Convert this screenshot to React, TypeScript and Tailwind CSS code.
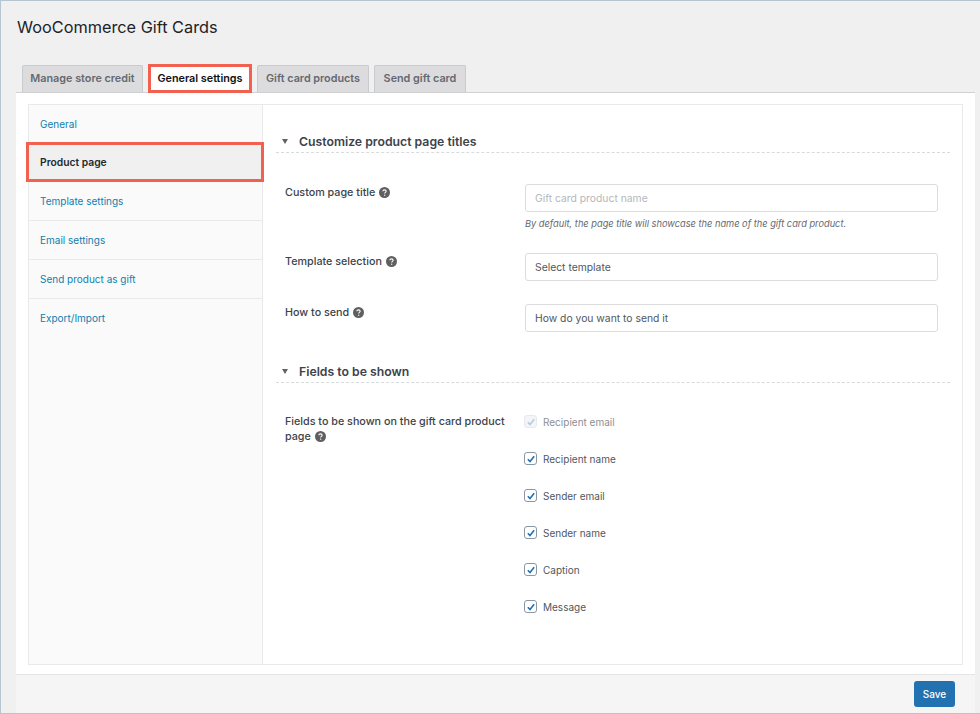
import React from "react";

function Help() {
  return (
    <svg viewBox="0 0 12 12" className="inline-block w-[11px] h-[11px] shrink-0 align-[-2px] ml-[4px]">
      <circle cx="6" cy="6" r="6" fill="#5f5f5f" />
      <path d="M4.2 4.7c0-1 .8-1.6 1.8-1.6s1.8.6 1.8 1.5c0 1.3-1.6 1.3-1.6 2.5" fill="none" stroke="#fff" strokeWidth="1.2" />
      <circle cx="6.2" cy="8.9" r=".75" fill="#fff" />
    </svg>
  );
}

function Check({ disabled }: { disabled?: boolean }) {
  return (
    <span className={"w-[13px] h-[13px] -ml-[1px] -mt-[2px] rounded-[3px] border flex items-center justify-center shrink-0 " + (disabled ? "border-[#e6eaee] bg-[#f3f5f7]" : "border-[#8a97a3] bg-white")}>
      <svg viewBox="0 0 12 12" className="w-[10px] h-[10px]">
        <path d="M2.2 6.2 4.8 9 9.8 2.6" fill="none" stroke={disabled ? "#b4cbe0" : "#2271b1"} strokeWidth="1.9" />
      </svg>
    </span>
  );
}

function Section({ title }: { title: string }) {
  return (
    <div className="flex items-center h-[25px] border-b border-dashed border-[#d8dbde] pt-[3px]">
      <span className="w-0 h-0 ml-[6px] border-l-[3.5px] border-r-[3.5px] border-t-[5px] border-l-transparent border-r-transparent border-t-[#5f6368]" />
      <span className="ml-[11px] text-[12.25px] leading-[16px] font-semibold text-[#3c434a]">{title}</span>
    </div>
  );
}

const Label = ({ children, top }: { children: React.ReactNode; top?: boolean }) => (
  <div className={"w-[249px] pl-[9px] pr-[10px] text-[#3c434a] font-medium text-[10.75px] leading-[14.5px] " + (top ? "pt-[1px]" : "pt-[2px]")}>{children}</div>
);

const Input = ({ children, muted }: { children: React.ReactNode; muted?: boolean }) => (
  <div className={"w-[413px] h-[28px] border border-[#dcdcde] rounded-[3px] bg-white px-[9px] pt-[1px] flex items-center text-[10.35px] " + (muted ? "text-[#b5b8bc]" : "text-[#50575e]")}>{children}</div>
);

const sideItems = ["General", "Product page", "Template settings", "Email settings", "Send product as gift", "Export/Import"];
const tabs = ["Manage store credit", "General settings", "Gift card products", "Send gift card"];
const checks = ["Recipient email", "Recipient name", "Sender email", "Sender name", "Caption", "Message"];

export default function App() {
  return (
    <div className="w-[980px] h-[714px] overflow-hidden bg-[#f0f0f1] border-t border-l border-b border-[#b5c6d0] flex flex-col pl-[15px] pr-[5px] text-[#3c434a]" style={{ fontFamily: "Inter, 'Noto Sans', sans-serif" }}>
      <h1 className="mt-[16px] h-[20px] pl-[1px] text-[16.3px] leading-[20px] font-normal text-[#1d2327]">WooCommerce Gift Cards</h1>
      <div className="mt-[27px] flex items-end h-[28px] pl-[6px] relative z-10">
        {tabs.map((t, i) =>
          i === 1 ? (
            <div key={t} className="h-[29px] -mb-[1px] ml-[5px] mr-[5px] w-[104px] pt-[1px] bg-white border-[3px] border-[#f2604f] flex items-center justify-center text-[10.8px] font-semibold text-[#111]">{t}</div>
          ) : (
            <div key={t} className={"h-[27px] bg-[#dcdcde] border border-[#c9cacc] border-b-0 rounded-t-[2px] flex items-center justify-center text-[10.8px] font-semibold text-[#646970] " + (i === 0 ? "w-[121px]" : i === 2 ? "w-[112px]" : "w-[92px] ml-[5px]")}>{t}</div>
          )
        )}
      </div>
      <div className="flex-1 bg-white border-t border-[#d0d1d3] flex flex-col">
        <div className="flex-1 px-[12px] pt-[11px] pb-[9px] flex flex-col">
          <div className="flex-1 flex border border-[#e8e9ea]">
            <div className="w-[234px] bg-[#fafafa] border-r border-[#e8e9ea] shrink-0">
              {sideItems.map((s, i) =>
                i === 1 ? (
                  <div key={s} className="h-[40px] -ml-[3px] -mt-[2px] w-[238px] relative bg-[#f0f0f1] border-[3px] border-[#f2604f] flex items-center pl-[11px] pt-[2px] text-[10.3px] font-semibold text-[#23282d]">{s}</div>
                ) : (
                  <div key={s} className={"h-[39px] flex items-center pl-[11px] text-[10px] text-[#0f7fae] " + (i === 0 || i === 5 ? "" : "pt-[1px] border-b border-[#e8e9ea]")}>{s}</div>
                )
              )}
            </div>
            <div className="flex-1 pl-[13px] pr-[12px] pt-[23px]">
              <Section title="Customize product page titles" />
              <div className="mt-[31px] flex">
                <Label>Custom page title<Help /></Label>
                <div>
                  <Input muted>Gift card product name</Input>
                  <div className="mt-[5px] text-[9.25px] italic leading-[13px] text-[#646970]">By default, the page title will showcase the name of the gift card product.</div>
                </div>
              </div>
              <div className="mt-[23px] flex">
                <Label>Template selection<Help /></Label>
                <Input>Select template</Input>
              </div>
              <div className="mt-[23px] flex">
                <Label>How to send<Help /></Label>
                <Input>How do you want to send it</Input>
              </div>
              <div className="mt-[26px]"><Section title="Fields to be shown" /></div>
              <div className="mt-[31px] flex">
                <Label top>Fields to be shown on the gift card product page<Help /></Label>
                <div className="flex flex-col gap-[24px] pt-[2px]">
                  {checks.map((c, i) => (
                    <div key={c} className="flex items-center h-[13px] gap-[6px]">
                      <Check disabled={i === 0} />
                      <span className={"text-[10px] " + (i === 0 ? "text-[#8c8f94]" : "text-[#50575e]")}>{c}</span>
                    </div>
                  ))}
                </div>
              </div>
            </div>
          </div>
        </div>
        <div className="h-[39px] bg-[#f5f5f5] border-t border-[#e5e5e5] flex items-center justify-end pr-[20px]">
          <button className="w-[41px] h-[26px] rounded-[3px] bg-[#2271b1] text-white text-[10px] font-medium">Save</button>
        </div>
      </div>
    </div>
  );
}
